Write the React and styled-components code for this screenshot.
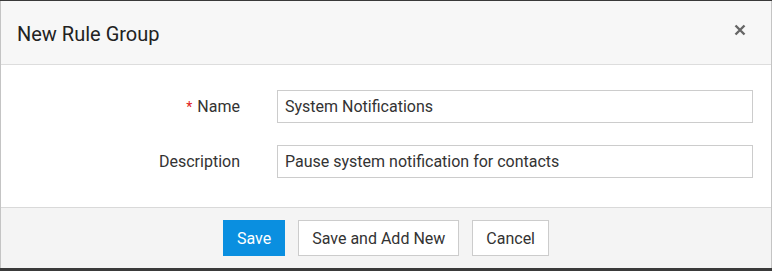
import React from 'react';
import styled, { createGlobalStyle } from 'styled-components';

const GlobalStyle = createGlobalStyle`
  html, body {
    margin: 0;
    padding: 0;
    background: #3a3a3a;
    font-family: Roboto, "Liberation Sans", Arial, sans-serif;
  }
`;

const Modal = styled.div`
  margin-top: 1px;
  width: 772px;
  height: 267px;
  box-sizing: border-box;
  background: #ffffff;
  border-left: 1px solid #c4c4c4;
  border-right: 1px solid #c4c4c4;
  display: flex;
  flex-direction: column;
`;

const Header = styled.div`
  height: 63px;
  background: #f7f7f7;
  border-bottom: 1px solid #dddddd;
  display: flex;
  align-items: center;
  justify-content: space-between;
  padding: 0 23px 0 16px;
`;

const Title = styled.h2`
  margin: 0;
  font-size: 20px;
  font-weight: 400;
  color: #222;
  padding-top: 2px;
`;

const CloseButton = styled.button`
  border: none;
  background: none;
  padding: 0;
  width: 16px;
  height: 16px;
  display: flex;
  align-items: center;
  justify-content: center;
  cursor: pointer;
  margin-top: -6px;
`;

const Body = styled.div`
  flex: 1;
  padding: 25px 19px 0 0;
  display: grid;
  grid-template-columns: 239px 476px;
  column-gap: 37px;
  row-gap: 22px;
  align-content: start;
`;

const Label = styled.label`
  font-size: 16px;
  color: #333;
  text-align: right;
  align-self: center;
`;

const Required = styled.span`
  color: #e02020;
  margin-right: 5px;
  font-size: 14px;
`;

const Input = styled.input`
  box-sizing: border-box;
  width: 100%;
  height: 33px;
  border: 1px solid #cccccc;
  padding: 0 7px;
  font-family: inherit;
  font-size: 16px;
  color: #333;
  outline: none;
`;

const Footer = styled.div`
  height: 61px;
  box-sizing: border-box;
  background: #f4f4f4;
  border-top: 1px solid #d9d9d9;
  display: flex;
  justify-content: center;
  align-items: flex-start;
  gap: 13px;
  padding-top: 12px;
`;

const Button = styled.button`
  height: 36px;
  padding: 0 13px;
  font-family: inherit;
  font-size: 16px;
  border: 1px solid ${(p) => (p.$primary ? '#0a8fe0' : '#cccccc')};
  background: ${(p) => (p.$primary ? '#0a8fe0' : '#ffffff')};
  color: ${(p) => (p.$primary ? '#ffffff' : '#333')};
  cursor: pointer;
`;

const App = () => {
  return (
    <>
      <GlobalStyle />
      <Modal>
        <Header>
          <Title>New Rule Group</Title>
          <CloseButton aria-label="Close">
            <svg width="12" height="12" viewBox="0 0 12 12">
              <path d="M1.5 1.5 L10.5 10.5 M10.5 1.5 L1.5 10.5" stroke="#666" strokeWidth="2.4" />
            </svg>
          </CloseButton>
        </Header>
        <Body>
          <Label>
            <Required>*</Required>Name
          </Label>
          <Input defaultValue="System Notifications" />
          <Label>Description</Label>
          <Input defaultValue="Pause system notification for contacts" />
        </Body>
        <Footer>
          <Button $primary>Save</Button>
          <Button>Save and Add New</Button>
          <Button>Cancel</Button>
        </Footer>
      </Modal>
    </>
  );
};

export default App;
